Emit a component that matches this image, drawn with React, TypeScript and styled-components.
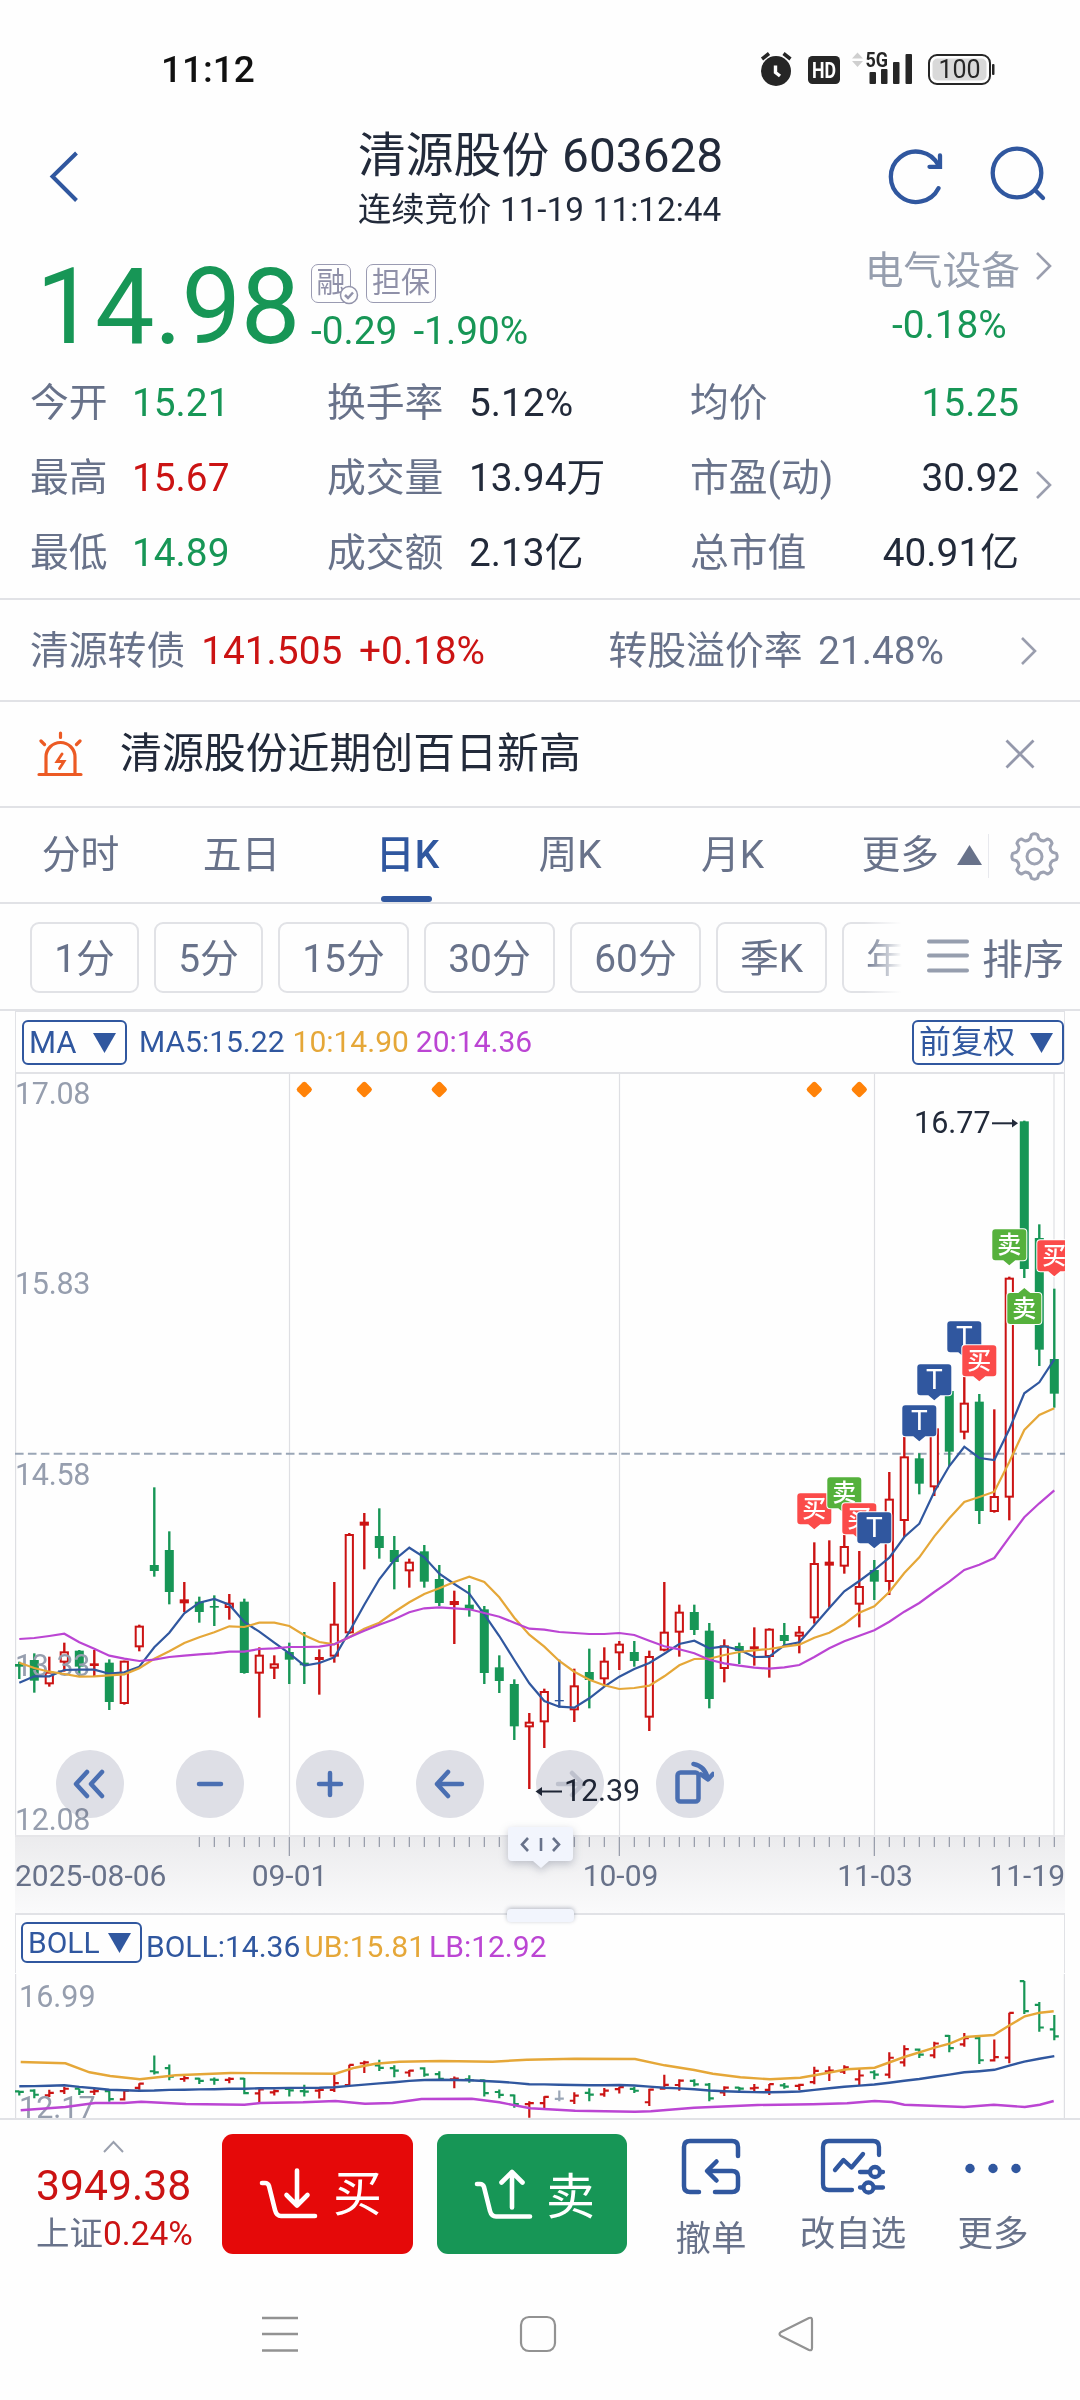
import React from 'react';
import styled, { createGlobalStyle, css } from 'styled-components';

const C = {
  ink: '#222a3a',
  gray: '#68728a',
  pale: '#969eae',
  line: '#e1e2e6',
  blue: '#30579f',
  green: '#179656',
  red: '#cb1313',
  gold: '#e5a738',
  violet: '#bb45d3',
};

const Global = createGlobalStyle`
  * { box-sizing: border-box; }
  body { margin: 0; background: #fefefe; }
  svg { display: block; flex: none; }
  button { font: inherit; color: inherit; background: none; border: 0; padding: 0; margin: 0; }
`;

const Page = styled.main`
  width: 1080px;
  height: 2400px;
  overflow: hidden;
  display: flex;
  flex-direction: column;
  background: #fefefe;
  color: ${C.ink};
  font-family: Roboto, 'Noto Sans CJK SC', sans-serif;
  font-size: 38.8px;
  white-space: nowrap;
`;

/* ---------- status bar ---------- */

const StatusBar = styled.div`
  height: 128px;
  padding: 20px 84px 0 161px;
  display: flex;
  justify-content: space-between;
`;
const Clock = styled.span`
  font-size: 37px;
  line-height: 100px;
  font-weight: 500;
  color: #111;
`;
const StatusIcons = styled.svg`
  margin-top: 30px;
  overflow: visible;
`;

/* ---------- header ---------- */

const Header = styled.header`
  height: 112px;
  display: flex;
  align-items: flex-start;
`;
const BackSlot = styled.button`
  width: 358px;
  padding: 22px 0 0 48px;
`;
const TitleBlock = styled.div`
  width: 528px;
`;
const Title = styled.h1`
  margin: 0;
  font-size: 47.8px;
  font-weight: 400;
  line-height: 56px;
  word-spacing: 1px;
`;
const Subtitle = styled.div`
  font-size: 33.3px;
  line-height: 52px;
  word-spacing: 0.5px;
`;
const HeaderActions = styled.div`
  display: flex;
  gap: 46px;
  padding-top: 18px;
`;

/* ---------- quote ---------- */

const QuoteTop = styled.section`
  height: 123px;
  display: flex;
`;
const Price = styled.div`
  width: 311px;
  padding-left: 36px;
  font-size: 106px;
  line-height: 134px;
  letter-spacing: -0.5px;
  color: ${C.green};
`;
const PriceSide = styled.div`
  width: 480px;
  padding-top: 24px;
`;
const Tags = styled.div`
  display: flex;
  gap: 15px;
  height: 40px;
`;
const Tag = styled.span<{ $w: number }>`
  position: relative;
  width: ${(p) => p.$w}px;
  height: 39px;
  border: 1.5px solid #9a9bb2;
  border-radius: 7px;
  color: #8f90a8;
  font-size: 29px;
  line-height: 37px;
  text-align: center;
`;
const Verified = styled.svg`
  position: absolute;
  right: -9px;
  bottom: -3px;
`;
const Change = styled.div`
  display: flex;
  gap: 16px;
  color: ${C.green};
  line-height: 54px;
`;
const Sector = styled.div`
  flex: 1;
  padding: 6px 27px 0 0;
`;
const SectorName = styled.div`
  display: flex;
  justify-content: flex-end;
  align-items: center;
  gap: 15px;
  line-height: 50px;
  color: ${C.pale};
  svg { margin-bottom: 11px; }
`;
const SectorChange = styled.div`
  color: ${C.green};
  line-height: 57px;
  padding-left: 101px;
`;

const Stats = styled.section`
  height: 237px;
  padding-top: 2px;
  display: grid;
  grid-template-columns: 102px 195px 142px 221px 150px 179px 1fr;
  grid-auto-rows: 75px;
  padding-left: 30px;
  border-bottom: 2px solid ${C.line};
  line-height: 75px;
`;
const Label = styled.span`
  color: ${C.gray};
`;
const Value = styled.span<{ $c?: string; $end?: boolean }>`
  color: ${(p) => p.$c ?? C.ink};
  ${(p) => p.$end && css`text-align: right;`}
`;
const StatArrow = styled.span`
  padding: 30px 0 0 16px;
`;

/* ---------- bond and news ---------- */

const BondRow = styled.section`
  height: 102px;
  display: flex;
  align-items: center;
  padding: 1px 42px 0 30px;
  border-bottom: 2px solid ${C.line};
  color: ${C.gray};
  line-height: 96px;
`;
const BondQuote = styled.span`
  color: ${C.red};
  margin-left: 16px;
  word-spacing: 7px;
`;
const Premium = styled.span`
  margin-left: auto;
  margin-right: 76px;
  word-spacing: 6px;
`;
const NewsRow = styled.section`
  height: 106px;
  display: flex;
  align-items: center;
  padding: 0 45px 0 36px;
  border-bottom: 2px solid ${C.line};
  font-size: 41.9px;
`;
const NewsText = styled.span`
  flex: 1;
  margin-left: 36px;
  line-height: 106px;
`;

/* ---------- tabs ---------- */

const Tabs = styled.nav`
  height: 96px;
  display: grid;
  grid-template-columns: 161px 161px 167px 162px 163px 174px 92px;
  grid-template-rows: 94px;
  border-bottom: 2px solid ${C.line};
  color: ${C.gray};
`;
const Tab = styled.button<{ $active?: boolean }>`
  position: relative;
  line-height: 94px;
  text-align: center;
  ${(p) =>
    p.$active &&
    css`
      color: ${C.blue};
      font-weight: 500;
      padding-left: 4px;
      &::after {
        content: '';
        position: absolute;
        bottom: 0;
        left: 59px;
        width: 51px;
        height: 6px;
        border-radius: 3px;
        background: ${C.blue};
      }
    `}
`;
const MoreTab = styled.button`
  display: flex;
  align-items: center;
  justify-content: flex-end;
  gap: 18px;
  padding-right: 6px;
  line-height: 94px;
`;
const Settings = styled.div`
  display: flex;
  align-items: center;
  height: 44px;
  margin-top: 26px;
  padding-left: 21px;
  border-left: 1px solid #e8e9ee;
`;

const PeriodRow = styled.nav`
  position: relative;
  height: 107px;
  display: flex;
  align-items: center;
  gap: 15px;
  padding: 2px 0 0 30px;
  overflow: hidden;
  border-bottom: 2px solid ${C.line};
`;
const Chip = styled.button<{ $w: number }>`
  flex: none;
  width: ${(p) => p.$w}px;
  height: 71px;
  border: 2px solid ${C.line};
  border-radius: 9px;
  color: ${C.gray};
  line-height: 70px;
  text-align: center;
`;
const SortBox = styled.div`
  position: absolute;
  right: 0;
  top: 0;
  height: 103px;
  width: 216px;
  padding-right: 16px;
  display: flex;
  align-items: center;
  justify-content: flex-end;
  gap: 13px;
  background: linear-gradient(90deg, rgba(254, 254, 254, 0), #fefefe 38px);
  color: ${C.gray};
  font-size: 41px;
`;

/* ---------- charts ---------- */

const Panel = styled.section`
  margin: 0 15px;
`;
const Legend = styled.div<{ $h: number; $boll?: boolean }>`
  height: ${(p) => p.$h}px;
  display: flex;
  align-items: flex-start;
  padding: ${(p) => (p.$boll ? '7px 0 0 5px' : '8px 0 0 6px')};
  border: solid ${C.line};
  border-width: ${(p) => (p.$boll ? '2px 1px 0' : '1px 1px 2px')};
  font-size: 30px;
`;
const Picker = styled.button<{ $w: number; $h: number; $fs?: number }>`
  width: ${(p) => p.$w}px;
  height: ${(p) => p.$h}px;
  display: flex;
  align-items: center;
  justify-content: space-between;
  padding: 0 9px 0 5px;
  border: 2px solid ${C.blue};
  border-radius: 6px;
  color: ${C.blue};
  font-size: ${(p) => p.$fs ?? 31}px;
  line-height: ${(p) => p.$h - 4}px;
`;
const Series = styled.span<{ $c: string; $ml: number; $lh: number }>`
  color: ${(p) => p.$c};
  margin-left: ${(p) => p.$ml}px;
  line-height: ${(p) => p.$lh}px;
`;
const Spacer = styled.span`
  flex: 1;
`;
const ChartBox = styled.div`
  position: relative;
  height: 761px;
`;
const Tools = styled.div`
  position: absolute;
  left: 41px;
  top: 676px;
  display: flex;
  gap: 52px;
  mix-blend-mode: multiply;
`;
const RoundButton = styled.button`
  width: 68px;
  height: 68px;
  border-radius: 50%;
  background: #dfe0e7;
  display: flex;
  align-items: center;
  justify-content: center;
`;
const Axis = styled.div`
  position: relative;
  height: 78px;
  background: linear-gradient(#ebebed, #fafafb);
`;
const Handle = styled.div`
  position: absolute;
  left: 492px;
  top: -9px;
  filter: drop-shadow(0 3px 4px rgba(50, 60, 90, 0.28));
`;
const Grip = styled.div`
  position: absolute;
  left: 492px;
  top: 74px;
  width: 67px;
  height: 13px;
  border-radius: 4px;
  background: #f2f5fd;
  box-shadow: 0 -1px 4px rgba(50, 60, 90, 0.35);
`;

/* ---------- bottom ---------- */

const BottomBar = styled.footer`
  height: 172px;
  border-top: 2px solid ${C.line};
  display: flex;
  align-items: flex-start;
  background: #fefefe;
`;
const IndexBox = styled.div`
  width: 222px;
  padding: 20px 0 0 36px;
  color: ${C.red};
`;
const IndexCaret = styled.div`
  padding-left: 67px;
  height: 18px;
`;
const IndexValue = styled.div`
  font-size: 42.7px;
  line-height: 54px;
`;
const IndexName = styled.div`
  font-size: 33.5px;
  line-height: 44px;
  span { color: ${C.gray}; }
`;
const Trade = styled.button<{ $bg: string; $ml?: number; $drop: number }>`
  width: ${(p) => (p.$ml ? 190 : 191)}px;
  height: 120px;
  margin: 14px 0 0 ${(p) => p.$ml ?? 0}px;
  border-radius: 11px;
  background: ${(p) => p.$bg};
  color: #fff;
  font-size: 49px;
  line-height: 100px;
  display: flex;
  align-items: center;
  padding-left: 36px;
  gap: ${(p) => (p.$ml ? 13 : 15)}px;
  span { padding-top: ${(p) => p.$drop}px; }
`;
const Action = styled.button<{ $w: number; $ml: number; $gap: number }>`
  width: ${(p) => p.$w}px;
  margin: 17px 0 0 ${(p) => p.$ml}px;
  display: flex;
  flex-direction: column;
  align-items: center;
  gap: ${(p) => p.$gap}px;
  color: ${C.gray};
  font-size: 35.5px;
  line-height: 44px;
`;
const NavBar = styled.div`
  height: 110px;
  padding: 24px 264px 0 260px;
  display: flex;
  justify-content: space-between;
`;

/* ---------- data: [kind, high, bodyTop, bodyBottom, low], thirds of a pixel below y=1400 ---------- */

type Candle = ['g' | 'r' | 'f' | 'b', number, number, number, number];
const candles: Candle[] = [
  ['g', 785, 792, 800, 837], ['g', 760, 780, 842, 878], ['r', 770, 815, 853, 860], ['r', 728, 754, 788, 815],
  ['g', 750, 752, 800, 830], ['f', 750, 790, 798, 830], ['g', 778, 788, 906, 930], ['r', 782, 782, 912, 914],
  ['r', 674, 677, 742, 754], ['g', 262, 495, 513, 530], ['g', 394, 450, 576, 613], ['r', 546, 598, 610, 636],
  ['g', 590, 605, 636, 668], ['g', 586, 618, 623, 678], ['r', 582, 608, 624, 659], ['g', 596, 605, 819, 821],
  ['r', 742, 764, 821, 953], ['r', 766, 790, 806, 837], ['g', 728, 756, 779, 852], ['g', 696, 788, 796, 852],
  ['f', 748, 771, 780, 884], ['r', 546, 671, 770, 788], ['r', 399, 402, 700, 702], ['r', 339, 365, 377, 508],
  ['g', 325, 408, 444, 476], ['g', 408, 450, 486, 568], ['r', 476, 485, 514, 563], ['g', 435, 454, 545, 563],
  ['g', 495, 537, 609, 618], ['r', 572, 603, 615, 732], ['g', 555, 614, 628, 650], ['g', 618, 628, 819, 852],
  ['g', 766, 802, 843, 879], ['g', 838, 852, 979, 1020], ['r', 939, 965, 982, 1167], ['r', 866, 873, 967, 1044],
  ['b', 779, 900, 904, 923], ['r', 806, 856, 931, 966], ['g', 746, 816, 840, 925], ['r', 742, 782, 838, 856],
  ['r', 723, 731, 760, 810], ['g', 723, 756, 783, 800], ['r', 752, 768, 953, 993], ['r', 546, 695, 752, 754],
  ['r', 614, 635, 698, 770], ['g', 614, 636, 690, 705], ['g', 669, 692, 897, 925], ['r', 718, 736, 807, 847],
  ['g', 728, 738, 753, 792], ['f', 682, 739, 748, 797], ['r', 685, 686, 771, 833], ['g', 669, 705, 723, 738],
  ['r', 678, 695, 710, 760], ['r', 427, 489, 655, 671], ['r', 421, 485, 496, 623], ['r', 405, 438, 500, 521],
  ['r', 453, 558, 614, 682], ['g', 480, 510, 545, 600], ['r', 216, 296, 546, 585], ['r', 110, 169, 363, 411],
  ['g', 160, 175, 251, 283], ['r', 60, 85, 262, 288], ['g', -40, -27, 155, 198], ['r', -70, 8, 98, 118],
  ['g', -18, 5, 333, 372], ['r', 28, 288, 336, 338], ['r', -370, -367, 293, 361], ['g', -838, -836, -393, -366],
  ['g', -527, -486, -151, -102], ['g', -334, -123, -19, 23],
];
const ma5 = [848, 829, 829, 810, 809, 809, 821, 817, 800, 742, 698, 640, 608, 597, 614, 666, 695, 728, 760, 797, 789, 772, 695, 614, 538, 480, 443, 472, 521, 552, 581, 643, 708, 780, 850, 903, 920, 923, 895, 860, 830, 807, 789, 761, 732, 722, 745, 739, 749, 771, 770, 736, 727, 676, 624, 574, 543, 510, 473, 411, 371, 275, 198, 140, 174, 180, 88, -20, -53, -122];
const ma10 = [788, 804, 815, 822, 830, 829, 826, 823, 805, 776, 754, 729, 712, 697, 679, 681, 668, 668, 678, 706, 726, 733, 712, 686, 668, 636, 607, 582, 565, 546, 530, 546, 592, 653, 704, 740, 783, 815, 839, 856, 867, 864, 857, 829, 796, 777, 776, 765, 756, 751, 747, 740, 734, 713, 698, 672, 638, 619, 576, 519, 472, 409, 355, 306, 291, 275, 186, 90, 45, 25];
const ma20 = [717, 714, 708, 701, 727, 746, 767, 776, 783, 779, 771, 767, 763, 760, 755, 755, 747, 745, 741, 741, 740, 733, 712, 692, 674, 658, 637, 625, 622, 625, 628, 639, 650, 668, 686, 689, 696, 699, 702, 702, 699, 705, 722, 739, 748, 760, 779, 790, 797, 803, 806, 802, 795, 771, 745, 724, 707, 691, 665, 635, 609, 576, 545, 510, 494, 474, 412, 352, 310, 271];
const upper = [[30, 846], [95, 850], [130, 877], [160, 888], [203, 898], [255, 886], [335, 879], [487, 881], [515, 863], [545, 851], [580, 845], [640, 843], [715, 845], [765, 839], [835, 836], [922, 837], [965, 856], [1008, 870], [1035, 881], [1075, 892], [1118, 898], [1162, 893], [1185, 885], [1230, 868], [1270, 863], [1313, 831], [1357, 803], [1380, 790], [1402, 771], [1443, 765], [1466, 736], [1488, 709], [1510, 698], [1530, 694]];
const lower = [[30, 991], [95, 981], [138, 969], [180, 969], [205, 965], [270, 972], [355, 974], [378, 969], [440, 967], [487, 963], [530, 971], [570, 969], [612, 957], [685, 956], [725, 967], [770, 985], [835, 992], [922, 995], [945, 994], [1008, 983], [1100, 975], [1180, 973], [1230, 970], [1270, 963], [1295, 966], [1313, 974], [1400, 981], [1443, 974], [1488, 981], [1510, 974], [1530, 963]];

const X = (i: number) => 19.3 + i * 15;
const Y = (v: number) => 1400 + v / 3;
const B = (v: number) => 1981 + (Y(v) - 1120.7) * 0.2031;
const path = (vals: number[], f: (v: number) => number) => vals.map((v, i) => `${X(i)},${f(v).toFixed(1)}`).join(' ');
const band = (pts: number[][]) => pts.map(([x, y]) => `${(x / 1.452).toFixed(1)},${(1780 + y / 3).toFixed(1)}`).join(' ');

type Mark = { i: number; y: number; t: string; c: string; up?: boolean };
const marks: Mark[] = [
  { i: 53, y: 1493.3, t: '买', c: '#fb4b4a' }, { i: 55, y: 1477.3, t: '卖', c: '#55b13c' },
  { i: 56, y: 1503.3, t: '买', c: '#fb4b4a' }, { i: 57, y: 1512.3, t: 'T', c: C.blue },
  { i: 60, y: 1405.3, t: 'T', c: C.blue }, { i: 61, y: 1364.3, t: 'T', c: C.blue },
  { i: 63, y: 1321.3, t: 'T', c: C.blue }, { i: 64, y: 1345.3, t: '买', c: '#fb4b4a' },
  { i: 66, y: 1229.3, t: '卖', c: '#55b13c' }, { i: 67, y: 1293, t: '卖', c: '#55b13c', up: true },
  { i: 69, y: 1240.3, t: '买', c: '#fb4b4a' },
];

const Chevron = ({ w = 14, h = 26 }: { w?: number; h?: number }) => (
  <svg width={w + 4} height={h + 4} fill="none" stroke="#9a9eae" strokeWidth="2.6">
    <path d={`M2 2 L${w + 1} ${h / 2 + 2} L2 ${h + 2}`} />
  </svg>
);
const Down = () => (
  <svg width="23" height="22" fill={C.blue}><path d="M0 1H23L11.5 21Z" /></svg>
);

const CandleChart = () => (
  <svg width="1050" height="761" viewBox="15 1074 1050 761">
    <g stroke="#dedfe3" strokeWidth="1.2">
      <path d="M15.6 1074V1835M289.5 1074V1835M619.5 1074V1835M874.5 1074V1835M1054 1074V1835M1064.4 1074V1835" />
    </g>
    <path d="M15 1453.8H1065" stroke="#9aa6b6" strokeWidth="2" strokeDasharray="8.6 4.3" />
    {[19, 23, 28, 53, 56].map((i) => (
      <rect key={i} x={X(i) - 6.1} y={1083.3} width="12.2" height="12.2" rx="2.5" fill="#ff8208" transform={`rotate(45 ${X(i)} 1089.4)`} />
    ))}
    {candles.map(([k, h, t, b, l], i) => {
      const col = k === 'g' ? C.green : k === 'b' ? C.blue : C.red;
      return (
        <g key={i}>
          <rect x={X(i) - 1.2} y={Y(h)} width="2.4" height={(l - h) / 3} fill={col} />
          {k === 'r' ? (
            <rect x={X(i) - 3.6} y={Y(t) + 1} width="7.2" height={Math.max((b - t) / 3 - 2, 2)} fill="#fefefe" stroke={col} strokeWidth="2" />
          ) : (
            <rect x={X(i) - 4.5} y={Y(t)} width="9" height={(b - t) / 3} fill={col} />
          )}
        </g>
      );
    })}
    <g fontSize="30.5" fill={C.pale} letterSpacing="-0.3">
      <text x="15" y="1104">17.08</text>
      <text x="15" y="1294">15.83</text>
      <text x="15" y="1485">14.58</text>
      <text x="15" y="1676">13.33</text>
      <text x="15" y="1830">12.08</text>
    </g>
    <g fill="none" strokeWidth="2.2">
      <polyline points={path(ma5, Y)} stroke={C.blue} />
      <polyline points={path(ma10, Y)} stroke={C.gold} />
      <polyline points={path(ma20, Y)} stroke={C.violet} />
    </g>
    <g fontSize="30.5" fill={C.ink}>
      <text x="914" y="1133">16.77</text>
      <text x="564" y="1800.5" letterSpacing="-0.1">12.39</text>
      <path d="M992 1123.3H1013" stroke={C.ink} strokeWidth="2" />
      <path d="M1018 1123.3L1012 1119V1127.6Z" />
      <path d="M541 1791.5H562" stroke={C.ink} strokeWidth="2" />
      <path d="M535.5 1791.5L542 1787V1796Z" />
    </g>
    {marks.map(({ i, y, t, c, up }) => (
      <g key={i} fill={c}>
        <path
          d={
            up
              ? `M${X(i) - 14} ${y}h8l6 -5l6 5h8q3 0 3 3v25q0 3 -3 3h-28q-3 0 -3 -3v-25q0 -3 3 -3Z`
              : `M${X(i) - 14} ${y}h28q3 0 3 3v25q0 3 -3 3h-8l-6 5l-6 -5h-8q-3 0 -3 -3v-25q0 -3 3 -3Z`
          }
          stroke="#fefefe"
          strokeWidth="2"
          paintOrder="stroke"
        />
        <text
          x={X(i)}
          y={y + (t === 'T' ? 25 : 24)}
          fill="#fff"
          fontSize={t === 'T' ? 28 : 24}
          fontWeight={t === 'T' ? 400 : 500}
          textAnchor="middle"
        >
          {t}
        </text>
      </g>
    ))}
  </svg>
);

const tb = { fill: 'none', stroke: '#4a6fb3', strokeWidth: 4.5, strokeLinecap: 'round' as const, strokeLinejoin: 'round' as const };

export default function App() {
  return (
    <Page>
      <Global />
      <StatusBar>
        <Clock>11:12</Clock>
        <StatusIcons width="236" height="40" viewBox="760 50 236 40" fill="#262626">
          <circle cx="776" cy="71" r="15" />
          <path d="M762 59L769 53.5M790.5 59L783.5 53.5" stroke="#262626" strokeWidth="3.5" />
          <path d="M775.5 65.5V72.5L780 76" stroke="#fff" strokeWidth="3.4" fill="none" />
          <rect x="808" y="56" width="32" height="28" rx="4.5" />
          <text x="824" y="78" fill="#fff" fontSize="21.5" fontWeight="700" textAnchor="middle" textLength="24" lengthAdjust="spacingAndGlyphs">HD</text>
          <path d="M852 58.5L857.5 52.5L863 58.5ZM852 61L857.5 67L863 61Z" fill="#cfcfcf" />
          <text x="865.5" y="67" fontSize="20.5" fontWeight="700" textLength="22.5" lengthAdjust="spacingAndGlyphs">5G</text>
          <rect x="869.5" y="72" width="6.5" height="12" rx="1" />
          <rect x="881" y="69" width="6.5" height="15" rx="1" />
          <rect x="893" y="62" width="6.5" height="22" rx="1" />
          <rect x="905.5" y="54" width="6.5" height="30" rx="1" />
          <rect x="929" y="55" width="61" height="29" rx="8" fill="#fefefe" stroke="#262626" strokeWidth="2" />
          <rect x="932.5" y="58.5" width="54" height="22" rx="5" fill="#d9d9d9" />
          <rect x="992" y="64" width="2.5" height="11" rx="1" />
          <text x="959.5" y="78.3" fontSize="25" textAnchor="middle">100</text>
        </StatusIcons>
      </StatusBar>

      <Header>
        <BackSlot>
          <svg width="32" height="54" fill="none" stroke={C.blue} strokeWidth="4">
            <path d="M28.5 3L4.5 26.5L28.5 50.5" />
          </svg>
        </BackSlot>
        <TitleBlock>
          <Title>清源股份 603628</Title>
          <Subtitle>连续竞价 11-19 11:12:44</Subtitle>
        </TitleBlock>
        <HeaderActions>
          <svg width="58" height="60" viewBox="886 146 58 60" fill="none" stroke={C.blue} strokeWidth="4.3" strokeLinecap="round">
            <path d="M938.5 188.2A25.2 25.2 0 1 1 938.5 165.4" />
            <path d="M940 155.5V166.8H929.5" />
          </svg>
          <svg width="58" height="60" viewBox="990 146 58 60" fill="none" stroke={C.blue} strokeWidth="4.3" strokeLinecap="round">
            <circle cx="1017" cy="173" r="24.3" />
            <path d="M1036 191L1043 198" />
          </svg>
        </HeaderActions>
      </Header>

      <QuoteTop>
        <Price>14.98</Price>
        <PriceSide>
          <Tags>
            <Tag $w={40}>
              融
              <Verified width="20" height="20" fill="#fefefe" stroke="#9293aa" strokeWidth="1.5">
                <circle cx="10" cy="10" r="8.5" />
                <path d="M6 10L9 13L14 7.5" fill="none" strokeWidth="2.5" />
              </Verified>
            </Tag>
            <Tag $w={70}>担保</Tag>
          </Tags>
          <Change><span>-0.29</span><span>-1.90%</span></Change>
        </PriceSide>
        <Sector>
          <SectorName>电气设备 <Chevron /></SectorName>
          <SectorChange>-0.18%</SectorChange>
        </Sector>
      </QuoteTop>

      <Stats>
        <Label>今开</Label><Value $c={C.green}>15.21</Value>
        <Label>换手率</Label><Value>5.12%</Value>
        <Label>均价</Label><Value $end $c={C.green}>15.25</Value><span />
        <Label>最高</Label><Value $c={C.red}>15.67</Value>
        <Label>成交量</Label><Value>13.94万</Value>
        <Label>市盈(动)</Label><Value $end>30.92</Value><StatArrow><Chevron /></StatArrow>
        <Label>最低</Label><Value $c={C.green}>14.89</Value>
        <Label>成交额</Label><Value>2.13亿</Value>
        <Label>总市值</Label><Value $end>40.91亿</Value><span />
      </Stats>

      <BondRow>
        清源转债<BondQuote>141.505 +0.18%</BondQuote>
        <Premium>转股溢价率 21.48%</Premium>
        <Chevron />
      </BondRow>

      <NewsRow>
        <svg width="48" height="48" viewBox="36 729 48 48" fill="none" stroke="#ec5a24" strokeWidth="3.2" strokeLinecap="round">
          <path d="M39 773.5H81M46 773V756A14.5 14.5 0 0 1 75 756V773M60.5 732V736.5M41 740L44.5 743.5M80 740L76.5 743.5" />
          <path d="M62 753L57 760.5H64L59.5 767.5" strokeWidth="2.8" />
        </svg>
        <NewsText>清源股份近期创百日新高</NewsText>
        <svg width="30" height="30" stroke="#9498ab" strokeWidth="2.8"><path d="M1.5 1.5L28.5 28.5M28.5 1.5L1.5 28.5" /></svg>
      </NewsRow>

      <Tabs>
        <Tab>分时</Tab><Tab>五日</Tab><Tab $active>日K</Tab><Tab>周K</Tab><Tab>月K</Tab>
        <MoreTab>更多 <svg width="25" height="20" fill={C.gray}><path d="M0 20L12.5 0L25 20Z" /></svg></MoreTab>
        <Settings>
          <svg width="49" height="49" viewBox="-24.5 -24.5 49 49" fill="none" stroke="#9da2b2" strokeWidth="3">
            <circle r="7.5" />
            <path
              strokeLinejoin="round"
              d={Array.from({ length: 8 }, (_, i) => {
                const p = (r: number, a: number) => {
                  const t = ((i * 45 + a - 90) * Math.PI) / 180;
                  return `${(r * Math.cos(t)).toFixed(1)} ${(r * Math.sin(t)).toFixed(1)}`;
                };
                return `${i ? 'L' : 'M'}${p(22, -8)}Q${p(23.5, 0)} ${p(22, 8)}L${p(18.5, 13)}Q${p(16.5, 22.5)} ${p(18.5, 32)}`;
              }).join('') + 'Z'}
            />
          </svg>
        </Settings>
      </Tabs>

      <PeriodRow>
        <Chip $w={109}>1分</Chip><Chip $w={109}>5分</Chip><Chip $w={131}>15分</Chip><Chip $w={131}>30分</Chip>
        <Chip $w={131}>60分</Chip><Chip $w={111}>季K</Chip><Chip $w={111}>年K</Chip>
        <SortBox>
          <svg width="42" height="34" stroke="#969eae" strokeWidth="4" strokeLinecap="round"><path d="M2 2.5H40M2 16.5H40M2 31.5H40" /></svg>
          排序
        </SortBox>
      </PeriodRow>

      <Panel>
        <Legend $h={63}>
          <Picker $w={105} $h={45}>MA <Down /></Picker>
          <Series $c={C.blue} $ml={12} $lh={44}>MA5:15.22</Series>
          <Series $c={C.gold} $ml={8} $lh={44}>10:14.90</Series>
          <Series $c={C.violet} $ml={7} $lh={44}>20:14.36</Series>
          <Spacer />
          <Picker $w={152} $h={45} $fs={32}>前复权 <Down /></Picker>
        </Legend>
        <ChartBox>
          <CandleChart />
          <Tools>
            <RoundButton><svg width="36" height="32" {...tb}><path d="M15 4L4 16L15 28M30 4L19 16L30 28" /></svg></RoundButton>
            <RoundButton><svg width="32" height="32" {...tb}><path d="M5 16H27" /></svg></RoundButton>
            <RoundButton><svg width="32" height="32" {...tb}><path d="M5 16H27M16 5V27" /></svg></RoundButton>
            <RoundButton><svg width="32" height="32" {...tb}><path d="M3 16H28M14 4L3 16L14 28" /></svg></RoundButton>
            <RoundButton><svg width="32" height="32" {...tb} stroke="#bfc2ce"><path d="M4 16H29M18 5L29 16L18 27" /></svg></RoundButton>
            <RoundButton>
              <svg width="48" height="48" viewBox="666 1760 48 48" {...tb}>
                <rect x="677.5" y="1772.5" width="21" height="29" rx="3" />
                <path d="M693.5 1764Q705 1766 708 1779M701 1774.5L708 1779.5L713 1774" />
              </svg>
            </RoundButton>
          </Tools>
        </ChartBox>
        <Axis>
          <svg width="1050" height="78" viewBox="15 1835 1050 78">
            <path d="M15 1836H1065" stroke="#e6e6e9" strokeWidth="2" />
            {Array.from({ length: 58 }, (_, n) => n + 12).map((i) => (
              <path key={i} d={`M${X(i)} 1837V${[18, 40, 57].includes(i) ? 1856 : 1847}`} stroke="#8b90a0" strokeWidth="1.1" />
            ))}
            <g fontSize="30" fill={C.gray} textAnchor="middle">
              <text x="15" y="1886" textAnchor="start">2025-08-06</text>
              <text x="289.5" y="1886">09-01</text>
              <text x="620.5" y="1886">10-09</text>
              <text x="875" y="1886">11-03</text>
              <text x="1065" y="1886" textAnchor="end">11-19</text>
            </g>
          </svg>
          <Handle>
            <svg width="68" height="44" fill="none">
              <path d="M4 1H63Q66 1 66 4V31Q66 35 62 35H42L34 42L26 35H5Q1 35 1 31V4Q1 1 4 1Z" fill="#f2f5fd" />
              <path d="M21 12L15 18.5L21 25M34 12V25M46 12L52 18.5L46 25" stroke={C.gray} strokeWidth="2.6" />
            </svg>
          </Handle>
          <Grip />
        </Axis>
        <Legend $h={60} $boll>
          <Picker $w={121} $h={41} $fs={30}>BOLL <Down /></Picker>
          <Series $c={C.blue} $ml={4} $lh={50}>BOLL:14.36</Series>
          <Series $c={C.gold} $ml={4} $lh={50}>UB:15.81</Series>
          <Series $c={C.violet} $ml={4} $lh={50}>LB:12.92</Series>
        </Legend>
        <svg width="1050" height="145" viewBox="15 1973 1050 145">
          <path d="M15.6 1974V2118M1064.4 1974V2118" stroke="#dedfe3" strokeWidth="1.2" />
          {candles.map(([k, h, t, b, l], i) => {
            const [o, c] = k === 'g' ? [t, b] : [b, t];
            return (
              <path
                key={i}
                d={`M${X(i)} ${B(h)}V${B(l) + 1}M${X(i) - 4.5} ${B(o)}H${X(i)}M${X(i)} ${B(c)}H${X(i) + 4.5}`}
                stroke={k === 'g' ? C.green : k === 'b' ? '#9aa6b6' : C.red}
                strokeWidth="2.2"
              />
            );
          })}
          <g fontSize="30.5" fill={C.pale}>
            <text x="19" y="2007">16.99</text>
            <text x="19" y="2118">12.17</text>
          </g>
          <g fill="none" strokeWidth="2.4">
            <polyline points={path(ma20, B)} stroke={C.blue} />
            <polyline points={band(upper)} stroke={C.gold} />
            <polyline points={band(lower)} stroke={C.violet} />
          </g>
        </svg>
      </Panel>

      <BottomBar>
        <IndexBox>
          <IndexCaret><svg width="21" height="14" fill="none" stroke="#9aa0ae" strokeWidth="2"><path d="M1 12L10.5 2L20 12" /></svg></IndexCaret>
          <IndexValue>3949.38</IndexValue>
          <IndexName><span>上证</span>0.24%</IndexName>
        </IndexBox>
        <Trade $bg="#e50909" $drop={2}>
          <svg width="60" height="54" viewBox="258 2166 60 54" fill="none" stroke="#fff" strokeWidth="4.6" strokeLinecap="round" strokeLinejoin="round">
            <path d="M262 2182H265Q268 2182 269 2185L275 2209Q276.5 2215 281 2215H315M297 2169.5V2204M286.5 2194L297 2204.5L307.5 2194" />
          </svg>
          <span>买</span>
        </Trade>
        <Trade $bg="#179656" $ml={24} $drop={7}>
          <svg width="60" height="54" viewBox="258 2166 60 54" fill="none" stroke="#fff" strokeWidth="4.6" strokeLinecap="round" strokeLinejoin="round">
            <path d="M262 2183H265Q268 2183 269 2186L275 2210Q276.5 2215.5 281 2215.5H315M297 2206.5V2171M286.5 2181.5L297 2171L307.5 2181.5" />
          </svg>
          <span>卖</span>
        </Trade>
        <Action $w={110} $ml={29} $gap={22}>
          <svg width="60" height="58" viewBox="682 2139 60 58" fill="none" stroke={C.blue} strokeWidth="4.5" strokeLinecap="round" strokeLinejoin="round">
            <path d="M739 2158V2149Q739 2143 733 2143H691Q685 2143 685 2149V2188Q685 2194 691 2194H700M716 2194H733Q739 2194 739 2188V2179Q739 2173 733 2173H709M717.5 2163.5L708 2173L717.5 2182.5" />
          </svg>
          撤单
        </Action>
        <Action $w={110} $ml={32} $gap={17}>
          <svg width="66" height="58" viewBox="820 2139 66 58" fill="none" stroke={C.blue} strokeWidth="4.3" strokeLinecap="round" strokeLinejoin="round">
            <path d="M879 2157V2149Q879 2143 873 2143H829Q823 2143 823 2149V2186Q823 2192 829 2192H852M835 2172L843.5 2162L851.5 2169.5L863 2156M860 2174H869M881 2174H883M860 2189.5H863M875 2189.5H883" />
            <circle cx="875" cy="2174" r="5" />
            <circle cx="868.5" cy="2189.5" r="5" />
          </svg>
          改自选
        </Action>
        <Action $w={110} $ml={30} $gap={17}>
          <svg width="60" height="58" fill={C.blue}>
            <circle cx="7" cy="31.5" r="4.7" /><circle cx="30" cy="31.5" r="4.7" /><circle cx="53" cy="31.5" r="4.7" />
          </svg>
          更多
        </Action>
      </BottomBar>

      <NavBar>
        <svg width="40" height="40" stroke="#929292" strokeWidth="2.6"><path d="M2 4H38M2 20H38M2 36.5H38" /></svg>
        <svg width="40" height="40" fill="none" stroke="#929292" strokeWidth="2.2"><rect x="3" y="3" width="34" height="34" rx="8" /></svg>
        <svg width="40" height="40" fill="none" stroke="#929292" strokeWidth="2.2" strokeLinejoin="round"><path d="M33 4Q36 3 36 6V34Q36 37 33 36L5 22Q2 20 5 18Z" /></svg>
      </NavBar>
    </Page>
  );
}
